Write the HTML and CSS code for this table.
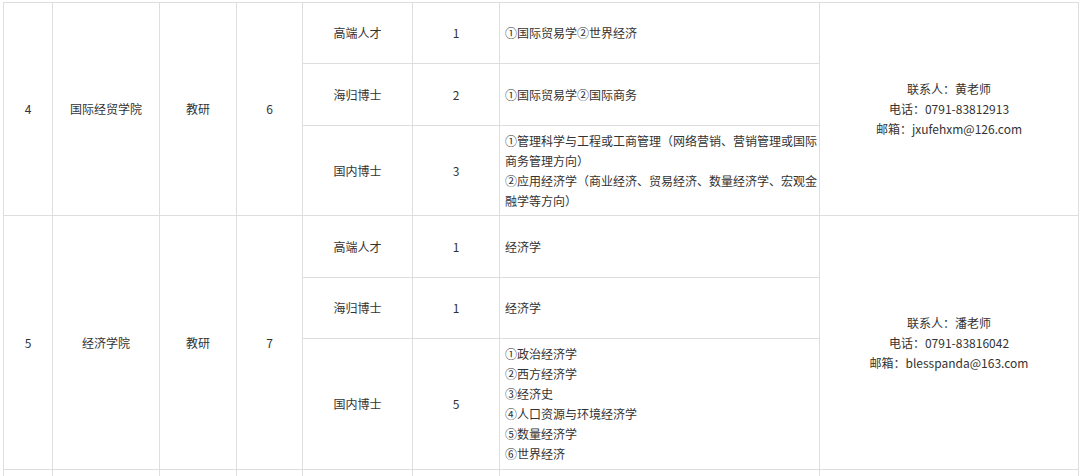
FILE: index.html
```html
<!DOCTYPE html>
<html lang="zh-CN">
<head>
<meta charset="utf-8">
<title>招聘表</title>
<link rel="stylesheet" href="styles.css">
</head>
<body>
<table class="grid">
  <colgroup>
    <col class="c1"><col class="c2"><col class="c3"><col class="c4">
    <col class="c5"><col class="c6"><col class="c7"><col class="c8">
  </colgroup>
  <tbody>
    <tr class="h61">
      <td rowspan="3">4</td>
      <td rowspan="3">国际经贸学院</td>
      <td rowspan="3">教研</td>
      <td rowspan="3">6</td>
      <td>高端人才</td>
      <td>1</td>
      <td class="major">①国际贸易学②世界经济</td>
      <td rowspan="3" class="contact">联系人：黄老师<br>电话：0791-83812913<br>邮箱：jxufehxm@126.com</td>
    </tr>
    <tr class="h62">
      <td>海归博士</td>
      <td>2</td>
      <td class="major">①国际贸易学②国际商务</td>
    </tr>
    <tr class="h89">
      <td>国内博士</td>
      <td>3</td>
      <td class="major nowrap">①管理科学与工程或工商管理（网络营销、营销管理或国际<br>商务管理方向）<br>②应用经济学（商业经济、贸易经济、数量经济学、宏观金<br>融学等方向）</td>
    </tr>
    <tr class="h62">
      <td rowspan="3">5</td>
      <td rowspan="3">经济学院</td>
      <td rowspan="3">教研</td>
      <td rowspan="3">7</td>
      <td>高端人才</td>
      <td>1</td>
      <td class="major">经济学</td>
      <td rowspan="3" class="contact">联系人：潘老师<br>电话：0791-83816042<br>邮箱：blesspanda@163.com</td>
    </tr>
    <tr class="h61">
      <td>海归博士</td>
      <td>1</td>
      <td class="major">经济学</td>
    </tr>
    <tr class="h131">
      <td>国内博士</td>
      <td>5</td>
      <td class="major">①政治经济学<br>②西方经济学<br>③经济史<br>④人口资源与环境经济学<br>⑤数量经济学<br>⑥世界经济</td>
    </tr>
    <tr class="h40">
      <td></td><td></td><td></td><td></td><td></td><td></td><td></td><td></td>
    </tr>
  </tbody>
</table>
</body>
</html>
```

FILE: styles.css
```css
html, body {
  margin: 0;
  padding: 0;
  background: #ffffff;
}

body {
  font-family: "Noto Sans CJK SC", "Noto Sans", sans-serif;
  font-size: 12px;
  color: #333333;
  overflow: hidden;
}

.grid {
  border-collapse: collapse;
  table-layout: fixed;
  width: 1075px;
  margin: 2px 0 0 3px;
}

.c1 { width: 49px; }
.c2 { width: 107px; }
.c3 { width: 77px; }
.c4 { width: 66px; }
.c5 { width: 110px; }
.c6 { width: 87px; }
.c7 { width: 320px; }
.c8 { width: 259px; }

.grid td {
  border: 1px solid #dedede;
  padding: 5px 2px;
  line-height: 20px;
  text-align: center;
  vertical-align: middle;
}

.grid td.major {
  text-align: left;
  padding-left: 5px;
  padding-right: 0;
}

.grid td.nowrap {
  white-space: nowrap;
  padding-bottom: 4px;
}

.h61 { height: 61px; }
.h62 { height: 62px; }
.h89 { height: 89px; }
.h131 { height: 131px; }
.h40 { height: 40px; }
```
